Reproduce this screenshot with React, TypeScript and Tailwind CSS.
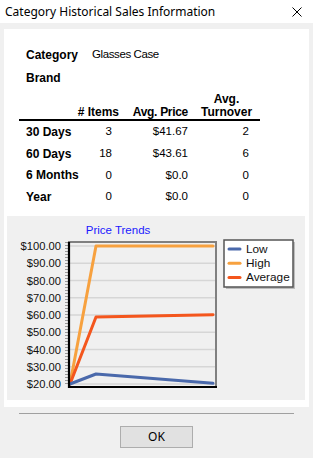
import React from "react";

const rows = [
  { label: "30 Days", items: "3", price: "$41.67", turnover: "2" },
  { label: "60 Days", items: "18", price: "$43.61", turnover: "6" },
  { label: "6 Months", items: "0", price: "$0.0", turnover: "0" },
  { label: "Year", items: "0", price: "$0.0", turnover: "0" },
];

// y position for a price value inside the chart svg
const py = (v: number) => 30 + (100 - v) * 1.725;

const ticks = [100, 90, 80, 70, 60, 50, 40, 30, 20];

const series = [
  { name: "High", color: "#f7a13f", pts: [[63, 20], [89, 100], [206, 100]] },
  { name: "Average", color: "#f4561d", pts: [[63, 20], [89, 58.8], [206, 60.2]] },
  { name: "Low", color: "#4a69ab", pts: [[63, 20], [89, 25.8], [206, 20.4]] },
];

const legend = [
  { name: "Low", color: "#4a69ab" },
  { name: "High", color: "#f7a13f" },
  { name: "Average", color: "#f4561d" },
];

function PriceChart() {
  return (
    <svg width="298" height="184" viewBox="0 0 298 184" style={{ fontFamily: "'Liberation Sans', Arial, sans-serif" }}>
      <rect x="0" y="0" width="298" height="184" fill="#f0f0f0" />
      <text x="111" y="18" fontSize="11.5" fill="#1a1aff" textAnchor="middle">
        Price Trends
      </text>

      {/* grid */}
      {ticks.map((t) => (
        <line key={t} x1="62" x2="208" y1={py(t)} y2={py(t)} stroke="#d6d6d6" strokeWidth="1.6" />
      ))}

      {/* frame */}
      <line x1="61" x2="209" y1="26" y2="26" stroke="#808080" strokeWidth="2" />
      <line x1="209" x2="209" y1="25" y2="171" stroke="#808080" strokeWidth="2" />
      <line x1="59.5" x2="59.5" y1="26" y2="170" stroke="#9a9a9a" strokeWidth="3" strokeDasharray="1 2" />

      {/* y labels */}
      {ticks.map((t) => (
        <text key={t} x="54" y={py(t) + 4} fontSize="11.2" fill="#111" textAnchor="end">
          ${t}.00
        </text>
      ))}

      {series.map((s) => (
        <polyline
          key={s.name}
          points={s.pts.map(([x, v]) => `${x},${py(v)}`).join(" ")}
          fill="none"
          stroke={s.color}
          strokeWidth="3"
          strokeLinejoin="round"
          strokeLinecap="round"
        />
      ))}

      <line x1="62" x2="62" y1="26" y2="172" stroke="#000" strokeWidth="2.2" />
      <line x1="61" x2="210" y1="171" y2="171" stroke="#000" strokeWidth="2.2" />

      {/* legend */}
      <rect x="219" y="26" width="69" height="47" fill="#9a9a9a" opacity="0.6" />
      <rect x="217" y="24" width="69" height="47" fill="#fff" stroke="#555" strokeWidth="1.5" />
      {legend.map((l, i) => (
        <g key={l.name}>
          <line x1="222" x2="233" y1={33 + i * 14.2} y2={33 + i * 14.2} stroke={l.color} strokeWidth="3" strokeLinecap="round" />
          <text x="239" y={37 + i * 14.2} fontSize="11.8" fill="#111">
            {l.name}
          </text>
        </g>
      ))}
    </svg>
  );
}

export default function App() {
  return (
    <div className="w-[313px] h-[458px] bg-[#f0f0f0] overflow-hidden text-black" style={{ fontFamily: "'Liberation Sans', Arial, sans-serif" }}>
      {/* Title bar */}
      <div className="h-[23px] bg-white flex items-center justify-between pl-[5px] pr-[11px]">
        <span className="text-[12px] leading-none" style={{ fontFamily: "'Noto Sans', 'Liberation Sans', sans-serif" }}>
          Category Historical Sales Information
        </span>
        <svg width="10" height="10" viewBox="0 0 10 10">
          <path d="M0.5 0.5 L9.5 9.5 M9.5 0.5 L0.5 9.5" stroke="#000" strokeWidth="1" fill="none" />
        </svg>
      </div>

      <div className="px-[4px] pt-[6px]">
        <div className="bg-white h-[378px] pt-[18px] px-[3px]">
          <div className="pl-[19px] flex items-center h-[16px] text-[11.5px]">
            <span className="w-[66px] font-bold text-[12px]">Category</span>
            <span className="tracking-[-0.4px]">Glasses Case</span>
          </div>
          <div className="pl-[19px] mt-[7px] h-[16px] flex items-center font-bold text-[12px]">Brand</div>

          <div className="ml-[12px] w-[241px] mt-[7px]">
            <div className="grid grid-cols-[55px_45px_69px_65px] font-bold text-[12px] leading-[12.5px]">
              <div />
              <div className="text-right self-end whitespace-nowrap">
                # Items
              </div>
              <div className="text-right self-end tracking-[-0.3px] whitespace-nowrap">Avg. Price</div>
              <div className="text-center pl-[12px]">
                Avg.
                <br />
                Turnover
              </div>
            </div>
            <div className="h-[2px] bg-black mt-[1px]" />
            {rows.map((r) => (
              <div key={r.label} className="grid grid-cols-[55px_45px_69px_65px] h-[21.7px] items-center text-[11.5px]">
                <div className="pl-[7px] font-bold text-[12px] whitespace-nowrap">{r.label}</div>
                <div className="text-right pr-[7px]">{r.items}</div>
                <div className="text-right">{r.price}</div>
                <div className="text-right pr-[4px]">{r.turnover}</div>
              </div>
            ))}
          </div>

          <div className="mt-[8.7px]">
            <PriceChart />
          </div>
        </div>

        <div className="mx-[15px] mt-[6px] h-px bg-[#a0a0a0]" />

        <div className="flex justify-center mt-[12px]">
          <button className="w-[73px] h-[22px] bg-[#e1e1e1] border border-[#adadad] text-[12px] leading-none flex items-center justify-center" style={{ fontFamily: "'Noto Sans', 'Liberation Sans', sans-serif" }}>
            OK
          </button>
        </div>
      </div>
    </div>
  );
}
